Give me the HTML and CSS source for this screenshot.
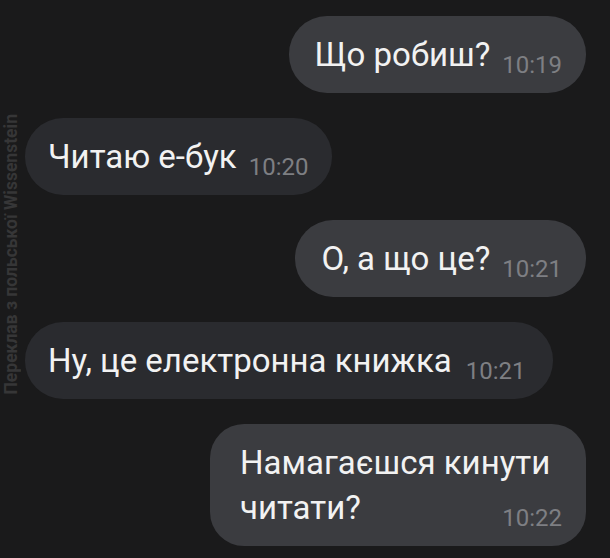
FILE: index.html
```html
<!DOCTYPE html>
<html lang="uk">
<head>
<meta charset="UTF-8">
<meta name="viewport" content="width=device-width, initial-scale=1.0">
<link rel="stylesheet" href="styles.css">
</head>
<body>
<div class="chat">
    <div class="msg out">
        <div class="bubble">Що робиш?<span class="time">10:19</span></div>
    </div>
    <div class="msg in">
        <div class="bubble">Читаю е-бук<span class="time">10:20</span></div>
    </div>
    <div class="msg out">
        <div class="bubble">О, а що це?<span class="time">10:21</span></div>
    </div>
    <div class="msg in">
        <div class="bubble">Ну, це електронна книжка<span class="time far">10:21</span></div>
    </div>
    <div class="msg out">
        <div class="bubble wide">Намагаєшся кинути читати?<span class="time">10:22</span></div>
    </div>
</div>
<div class="mark">Переклав з польської Wissenstein</div>
</body>
</html>
```

FILE: styles.css
```css
body {
  margin: 0;
  background-color: #1a1a1b;
  font-family: Roboto, "Noto Sans", sans-serif;
  overflow: hidden;
}

.chat {
  display: flex;
  flex-direction: column;
  gap: 25px;
  padding: 16px 24px 0 25px;
}

.msg {
  display: flex;
}

.msg.out {
  justify-content: flex-end;
}

.msg.in {
  justify-content: flex-start;
}

.bubble {
  padding: 16px 24px 16px 26px;
  border-radius: 38px;
  font-size: 33px;
  line-height: 45px;
  color: #f2f2f2;
}

.out .bubble {
  background-color: #3b3c40;
}

.in .bubble {
  background-color: #2a2b2f;
}

.in .bubble {
  padding-left: 23px;
}

.bubble.wide {
  width: 322px;
  border-radius: 34px;
  padding-left: 30px;
}

.time {
  float: right;
  margin-left: 12px;
  margin-top: 21px;
  font-size: 24px;
  line-height: 24px;
  color: #7e7f83;
}

.time.far {
  margin-left: 14px;
  margin-right: 4px;
}

.mark {
  position: absolute;
  left: 1px;
  top: 114px;
  writing-mode: vertical-rl;
  transform: rotate(180deg);
  font-size: 17.5px;
  font-weight: bold;
  color: #363637;
}
```
